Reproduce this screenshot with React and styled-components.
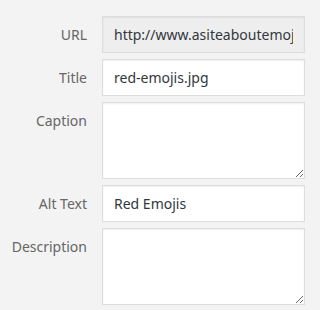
import { styled, createGlobalStyle } from 'styled-components';

const GlobalStyle = createGlobalStyle`
  html, body {
    margin: 0;
    padding: 0;
    background: #f3f3f3;
  }
`

const fields = [
  { label: 'URL', value: 'http://www.asiteaboutemojis.com/wp-content/uploads/red-emojis.jpg', readOnly: true },
  { label: 'Title', value: 'red-emojis.jpg' },
  { label: 'Caption', multiline: true },
  { label: 'Alt Text', value: 'Red Emojis' },
  { label: 'Description', multiline: true },
];

function App() {
  return (
    <Page>
      <GlobalStyle />
      <Form>
        {fields.map((f) => (
          <Row key={f.label}>
            <Label>{f.label}</Label>
            {f.multiline ? (
              <TextArea defaultValue="" />
            ) : (
              <Input defaultValue={f.value} readOnly={f.readOnly} $readOnly={f.readOnly} />
            )}
          </Row>
        ))}
      </Form>
    </Page>
  );
}

export default App;

const Page = styled.div`
  width: 320px;
  height: 310px;
  background: #f3f3f3;
  font-family: 'Noto Sans', 'Open Sans', sans-serif;
  overflow: hidden;
`

const Form = styled.div`
  display: flex;
  flex-direction: column;
  gap: 6px;
  padding: 16px 0 0 0;
`

const Row = styled.div`
  display: flex;
  align-items: flex-start;
  gap: 15px;
`

const Label = styled.label`
  width: 87px;
  flex-shrink: 0;
  text-align: right;
  color: #666;
  font-size: 14px;
  line-height: 37px;
`

const fieldBase = `
  box-sizing: border-box;
  width: 203px;
  margin: 0;
  border: 1px solid #ddd;
  box-shadow: inset 0 1px 2px rgba(0,0,0,0.07);
  border-radius: 0;
  font-family: 'Noto Sans', 'Open Sans', sans-serif;
  font-size: 14px;
  color: #32373c;
  outline: none;
`

const Input = styled.input`
  ${fieldBase}
  height: 37px;
  padding: 0 11px;
  background: ${props => props.$readOnly ? '#eeeeee' : '#ffffff'};
`

const TextArea = styled.textarea`
  ${fieldBase}
  display: block;
  height: 77px;
  padding: 6px 11px;
  background: #fff;
  resize: vertical;
`
